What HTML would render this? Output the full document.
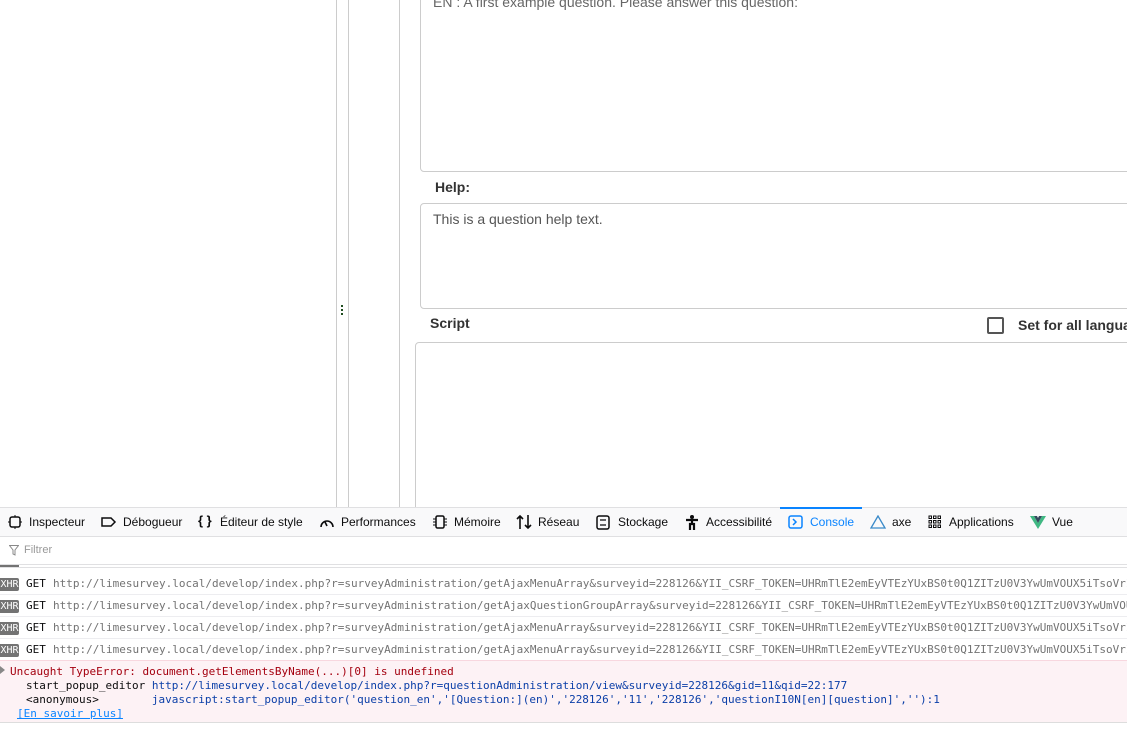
<!DOCTYPE html>
<html><head><meta charset="utf-8"><style>
*{margin:0;padding:0;box-sizing:border-box}
body{width:1127px;height:755px;overflow:hidden;background:#fff;position:relative;font-family:"Liberation Sans",sans-serif}
.a{position:absolute}
.mono{font-family:"DejaVu Sans Mono","Liberation Mono",monospace;font-size:11px;white-space:pre}
.tab{position:absolute;top:507px;height:30px;line-height:30px;font-size:12px;color:#0c0c0d;white-space:nowrap}
.tab svg{position:absolute;top:8px;left:0}
.tab span{position:absolute;white-space:nowrap}
.row{position:absolute;left:0;width:1127px;height:22px;border-bottom:1px solid #ededf0;line-height:22px}
.xhr{position:absolute;left:0;top:5px;width:19px;height:13px;background:#737373;color:#fff;font-size:10px;line-height:13px;text-align:center;border-radius:0 2px 2px 0;font-family:"DejaVu Sans Mono",monospace}
.get{position:absolute;left:26px;color:#0c0c0d}
.url{position:absolute;left:53px;color:#737373}
</style></head><body>
<div class="a" style="left:336px;top:0;width:1px;height:507px;background:#ccc"></div>
<div class="a" style="left:348px;top:0;width:1px;height:507px;background:#ccc"></div>
<div class="a" style="left:399px;top:0;width:1px;height:507px;background:#ccc"></div>
<div class="a" style="left:341px;top:305px;width:2px;height:2px;background:#1f4d1f"></div>
<div class="a" style="left:341px;top:309px;width:2px;height:2px;background:#1f4d1f"></div>
<div class="a" style="left:341px;top:313px;width:2px;height:2px;background:#1f4d1f"></div>
<div class="a" style="left:420px;top:-10px;width:720px;height:182px;border:1px solid #ccc;border-radius:4px"></div>
<div class="a" style="left:433px;top:-6px;font-size:14px;color:#666">EN : A first example question. Please answer this question:</div>
<div class="a" style="left:435px;top:179px;font-size:14px;font-weight:bold;color:#333">Help:</div>
<div class="a" style="left:420px;top:203px;width:720px;height:106px;border:1px solid #ccc;border-radius:4px"></div>
<div class="a" style="left:433px;top:211px;font-size:14px;color:#555">This is a question help text.</div>
<div class="a" style="left:430px;top:315px;font-size:14px;font-weight:bold;color:#333">Script</div>
<div class="a" style="left:987px;top:317px;width:17px;height:17px;border:2px solid #555;border-radius:2px"></div>
<div class="a" style="left:1018px;top:317px;font-size:14px;font-weight:bold;color:#333;white-space:nowrap">Set for all languages</div>
<div class="a" style="left:415px;top:342px;width:730px;height:180px;border:1px solid #ccc;border-radius:4px"></div>
<div class="a" style="left:0;top:507px;width:1127px;height:30px;background:#f9f9fa;border-top:1px solid #e0e0e2;border-bottom:1px solid #e0e0e2"></div>
<div class="a" style="left:780px;top:507px;width:82px;height:2px;background:#0a84ff"></div>
<div class="tab" style="left:8px"><svg width="14" height="14"><rect x="2" y="2" width="10" height="10" rx="2" fill="none" stroke="#0c0c0d" stroke-width="1.5"/><path d="M7 0v2M7 12v2M0 7h2M12 7h2" stroke="#0c0c0d"/></svg><span style="left:21px">Inspecteur</span></div>
<div class="tab" style="left:101px"><svg width="16" height="14"><path d="M1 3h9l4 4-4 4H1z" fill="none" stroke="#0c0c0d" stroke-width="1.5"/></svg><span style="left:22px">Débogueur</span></div>
<div class="tab" style="left:198px"><span style="left:0;font-weight:bold;font-size:13px;top:-1px">{ }</span><span style="left:22px">Éditeur de style</span></div>
<div class="tab" style="left:319px"><svg width="16" height="14"><path d="M2 12A6 6 0 1 1 14 12" fill="none" stroke="#0c0c0d" stroke-width="1.6"/><path d="M8 11l-2-4" stroke="#0c0c0d" stroke-width="1.6"/></svg><span style="left:22px">Performances</span></div>
<div class="tab" style="left:432px"><svg width="16" height="14"><rect x="4" y="1" width="8" height="12" rx="1.5" fill="none" stroke="#0c0c0d" stroke-width="1.5"/><path d="M1 4h3M1 7h3M1 10h3M12 4h3M12 7h3M12 10h3" stroke="#0c0c0d"/></svg><span style="left:22px">Mémoire</span></div>
<div class="tab" style="left:516px"><svg width="16" height="16" style="top:7px"><path d="M4 15V2M1 5l3-3 3 3M12 1v13M9 11l3 3 3-3" fill="none" stroke="#0c0c0d" stroke-width="1.6"/></svg><span style="left:22px">Réseau</span></div>
<div class="tab" style="left:596px"><svg width="14" height="15"><rect x="1" y="1" width="12" height="13" rx="2" fill="none" stroke="#0c0c0d" stroke-width="1.5"/><path d="M4 5h6M4 10h6" stroke="#0c0c0d" stroke-width="1.3"/></svg><span style="left:22px">Stockage</span></div>
<div class="tab" style="left:685px"><svg width="14" height="15"><circle cx="7" cy="2" r="2" fill="#0c0c0d"/><path d="M1 5h12M7 5v5M5 15V9h4v6" stroke="#0c0c0d" stroke-width="2.2" fill="none"/></svg><span style="left:21px">Accessibilité</span></div>
<div class="tab" style="left:788px;color:#0a84ff"><svg width="15" height="14"><rect x="1" y="1" width="13" height="12" rx="2" fill="none" stroke="#0a84ff" stroke-width="1.5"/><path d="M5 4l3 3-3 3" fill="none" stroke="#0a84ff" stroke-width="1.5"/></svg><span style="left:22px">Console</span></div>
<div class="tab" style="left:870px"><svg width="16" height="15"><path d="M8 1L1 13h14z" fill="none" stroke="#3a8ac9" stroke-width="1.3"/></svg><span style="left:22px">axe</span></div>
<div class="tab" style="left:928px"><svg width="14" height="14"><g fill="none" stroke="#0c0c0d"><rect x="1" y="1" width="2.5" height="2.5"/><rect x="5.5" y="1" width="2.5" height="2.5"/><rect x="10" y="1" width="2.5" height="2.5"/><rect x="1" y="5.5" width="2.5" height="2.5"/><rect x="5.5" y="5.5" width="2.5" height="2.5"/><rect x="10" y="5.5" width="2.5" height="2.5"/><rect x="1" y="10" width="2.5" height="2.5"/><rect x="5.5" y="10" width="2.5" height="2.5"/><rect x="10" y="10" width="2.5" height="2.5"/></g></svg><span style="left:21px">Applications</span></div>
<div class="tab" style="left:1030px"><svg width="16" height="14"><path d="M0 1h4l4 7 4-7h4L8 14z" fill="#41b883"/><path d="M4 1h3l1 2 1-2h3L8 8z" fill="#35495e"/></svg><span style="left:22px">Vue</span></div>
<div class="a" style="left:0;top:537px;width:1127px;height:28px;border-bottom:1px solid #e0e0e2"></div>
<svg class="a" style="left:9px;top:545px" width="10" height="11"><path d="M0.5 0.5h9L6 5v5L4 9V5z" fill="none" stroke="#888"/></svg>
<div class="a" style="left:24px;top:544px;font-size:11px;color:#999">Filtrer</div>
<div class="a" style="left:0;top:565px;width:19px;height:3px;background:#737373"></div>
<div class="a" style="left:0;top:567px;width:1127px;height:1px;background:#e0e0e2"></div>
<div class="row mono" style="top:573px"><div class="xhr">XHR</div><span class="get">GET</span><span class="url">http://limesurvey.local/develop/index.php?r=surveyAdministration/getAjaxMenuArray&amp;surveyid=228126&amp;YII_CSRF_TOKEN=UHRmTlE2emEyVTEzYUxBS0t0Q1ZITzU0V3YwUmVOUX5iTsoVrI</span></div>
<div class="row mono" style="top:595px"><div class="xhr">XHR</div><span class="get">GET</span><span class="url">http://limesurvey.local/develop/index.php?r=surveyAdministration/getAjaxQuestionGroupArray&amp;surveyid=228126&amp;YII_CSRF_TOKEN=UHRmTlE2emEyVTEzYUxBS0t0Q1ZITzU0V3YwUmVOU</span></div>
<div class="row mono" style="top:617px"><div class="xhr">XHR</div><span class="get">GET</span><span class="url">http://limesurvey.local/develop/index.php?r=surveyAdministration/getAjaxMenuArray&amp;surveyid=228126&amp;YII_CSRF_TOKEN=UHRmTlE2emEyVTEzYUxBS0t0Q1ZITzU0V3YwUmVOUX5iTsoVrI</span></div>
<div class="row mono" style="top:639px"><div class="xhr">XHR</div><span class="get">GET</span><span class="url">http://limesurvey.local/develop/index.php?r=surveyAdministration/getAjaxMenuArray&amp;surveyid=228126&amp;YII_CSRF_TOKEN=UHRmTlE2emEyVTEzYUxBS0t0Q1ZITzU0V3YwUmVOUX5iTsoVrI</span></div>
<div class="a mono" style="left:0;top:660px;width:1127px;height:63px;background:#fdf2f5;border-top:1px solid #f8d7df;border-bottom:1px solid #ddd;line-height:14px">
<div class="a" style="left:0;top:5px;width:0;height:0;border-left:5px solid #888;border-top:4px solid transparent;border-bottom:4px solid transparent"></div>
<div class="a" style="left:10px;top:4px;color:#a4000f">Uncaught TypeError: document.getElementsByName(...)[0] is undefined</div>
<div class="a" style="left:26px;top:18px;color:#0c0c0d">start_popup_editor <span style="color:#0b3fa8">http://limesurvey.local/develop/index.php?r=questionAdministration/view&amp;surveyid=228126&amp;gid=11&amp;qid=22:177</span></div>
<div class="a" style="left:26px;top:32px;color:#0c0c0d">&lt;anonymous&gt;        <span style="color:#0b3fa8">javascript:start_popup_editor('question_en','[Question:](en)','228126','11','228126','questionI10N[en][question]',''):1</span></div>
<div class="a" style="left:17px;top:46px;color:#0a84ff;text-decoration:underline">[En savoir plus]</div>
</div>
</body></html>
